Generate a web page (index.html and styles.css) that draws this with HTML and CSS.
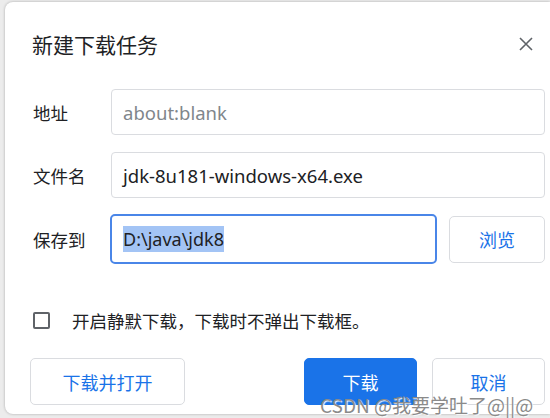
FILE: index.html
```html
<!DOCTYPE html>
<html lang="zh-CN">
<head>
  <meta charset="UTF-8"/>
  <title>新建下载任务</title>
  <link rel="stylesheet" href="styles.css">
</head>
<body>
  <div class="dialog">
    <div class="header">
      <h1>新建下载任务</h1>
      <svg class="close" width="14" height="14" viewBox="0 0 14 14">
        <path d="M1 1 L13 13 M13 1 L1 13" stroke="#5f6368" stroke-width="1.6" fill="none"/>
      </svg>
    </div>

    <div class="row">
      <span class="label">地址</span>
      <div class="field muted">about:blank</div>
    </div>
    <div class="row">
      <span class="label">文件名</span>
      <div class="field">jdk-8u181-windows-x64.exe</div>
    </div>
    <div class="row">
      <span class="label">保存到</span>
      <div class="field focused"><span class="selected">D:\java\jdk8</span></div>
      <div class="btn browse">浏览</div>
    </div>

    <div class="check-row">
      <span class="checkbox"></span>
      <span>开启静默下载，下载时不弹出下载框。</span>
    </div>

    <div class="actions">
      <div class="btn wide">下载并打开</div>
      <div class="spacer"></div>
      <div class="btn primary">下载</div>
      <div class="btn">取消</div>
    </div>
  </div>

  <div class="watermark">CSDN @我要学吐了@||@</div>
</body>
</html>
```

FILE: styles.css
```css
:root {
  --text: #202124;
  --muted: #80868b;
  --border: #dadce0;
  --blue: #1a73e8;
  --focus: #4a86e8;
}

body {
  margin: 0;
  background: #ececec;
  font-family: "Segoe UI", "Noto Sans", "Noto Sans CJK SC", sans-serif;
  color: var(--text);
  overflow: hidden;
  height: 418px;
}

.dialog {
  margin: 2px 0 0 5px;
  width: 515px;
  height: 412px;
  padding: 0 5px 0 25px;
  background: #fff;
  border-radius: 8px 0 0 8px;
  box-shadow: 0 0 3px rgba(0, 0, 0, 0.28);
}

.header {
  display: flex;
  align-items: center;
  justify-content: space-between;
  padding: 28px 12px 0 2px;
  height: 27px;
}

h1 {
  margin: 0;
  font-size: 21px;
  font-weight: normal;
  font-family: "Noto Sans CJK SC", sans-serif;
}

.close {
  display: block;
}

.row {
  display: flex;
  align-items: center;
  gap: 12px;
  padding-left: 3px;
  margin-top: 17px;
}

.header + .row {
  margin-top: 32px;
}

.label {
  width: 66px;
  font-size: 17.5px;
  font-family: "Noto Sans CJK SC", sans-serif;
}

.field {
  flex: 1;
  height: 44px;
  border: 1px solid var(--border);
  border-radius: 4px;
  padding: 0 11px;
  display: flex;
  align-items: center;
  font-size: 18.5px;
}

.field.muted {
  color: var(--muted);
}

.field.focused {
  border: 2px solid var(--focus);
  border-radius: 5px;
  margin: -1px 0 -1px -1px;
  height: 46px;
  font-size: 18px;
}

.selected {
  background: #a3c4f5;
  line-height: 26px;
}

.btn {
  height: 45px;
  border: 1px solid var(--border);
  border-radius: 5px;
  display: flex;
  align-items: center;
  justify-content: center;
  color: var(--blue);
  font-size: 18px;
  font-family: "Noto Sans CJK SC", sans-serif;
  width: 111px;
}

.browse {
  width: 94px;
}

.check-row {
  display: flex;
  align-items: center;
  gap: 22px;
  padding-left: 3px;
  margin-top: 45px;
  font-size: 17.5px;
  font-family: "Noto Sans CJK SC", sans-serif;
}

.checkbox {
  width: 13px;
  height: 13px;
  border: 2px solid #5f6368;
  border-radius: 2px;
}

.actions {
  display: flex;
  gap: 15px;
  margin-top: 25px;
}

.actions .wide {
  width: 153px;
}

.spacer {
  flex: 1;
}

.btn.primary {
  background: var(--blue);
  border-color: var(--blue);
  color: #fff;
}

.watermark {
  position: absolute;
  left: 320px;
  top: 391px;
  font-size: 19px;
  color: #8a8a8a;
  font-family: "Noto Sans CJK SC", sans-serif;
  text-shadow: 1px 1px 1px #fff;
}
```
